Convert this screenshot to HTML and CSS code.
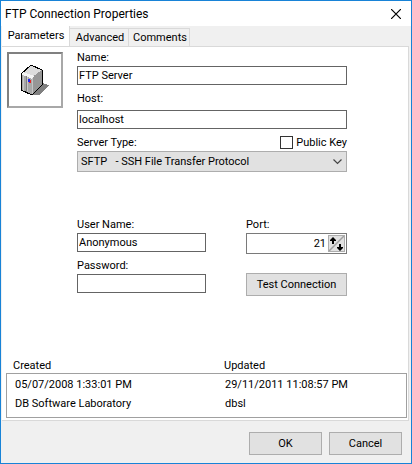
FILE: index.html
```html
<!DOCTYPE html>
<html lang="en">
<head>
<meta charset="utf-8">
<meta name="viewport" content="width=device-width, initial-scale=1">
<title>FTP Connection Properties</title>
<link rel="stylesheet" href="styles.css">
</head>
<body>
<form class="window">
  <header class="titlebar">
    <h1 class="title">FTP Connection Properties</h1>
    <button class="close" type="button" aria-label="Close">
      <svg width="10" height="10" viewBox="0 0 10 10"><path d="M0 0L10 10M10 0L0 10" stroke="#000" stroke-width="1.2"/></svg>
    </button>
  </header>
  <nav class="tabs" role="tablist">
    <button class="tab tab-active" type="button" role="tab" aria-selected="true">Parameters</button>
    <button class="tab" type="button" role="tab">Advanced</button>
    <button class="tab" type="button" role="tab">Comments</button>
  </nav>
  <main class="panel">
    <div class="params">
      <div class="picture">
        <svg width="30" height="32" viewBox="0 0 30 32" shape-rendering="crispEdges">
          <path d="M12 31L22 19L29 21L27 24L19 31Z" fill="#808080"/>
          <path d="M1 10L11 1L22 6L12 13Z" fill="#dcdcdc"/>
          <path d="M1 10L12 13V31L1 26Z" fill="#a8a8a8"/>
          <path d="M12 13L22 6V21L12 31Z" fill="#969696"/>
          <path d="M1 10L3 8L14 12L12 15Z" fill="#f4f4f4"/>
          <path d="M3.500 11V27M7.500 13V29" stroke="#c8c8c8"/>
          <path d="M6.500 12V28" stroke="#808080"/>
          <path d="M12.500 14V30" stroke="#c4c4c4"/>
          <path d="M1 10L11 1L22 6V21L12 31L1 26Z" fill="none" stroke="#000"/>
          <path d="M8 15H10V18H8Z" fill="#22e"/>
          <path d="M10 16H11V19H9V18H10Z" fill="#e22"/>
        </svg>
      </div>
      <div class="fields">
        <div class="field">
          <label for="name">Name:</label>
          <input class="text" id="name" type="text" value="FTP Server">
        </div>
        <div class="field field-loose">
          <label for="host">Host:</label>
          <input class="text" id="host" type="text" value="localhost">
        </div>
        <div class="field">
          <div class="split">
            <label for="type">Server Type:</label>
            <span class="check"><input class="box" id="key" type="checkbox"><label for="key">Public Key</label></span>
          </div>
          <div class="combo">
            <select id="type"><option>SFTP &nbsp; - SSH File Transfer Protocol</option></select>
            <svg class="chevron" width="9" height="6" viewBox="0 0 9 6"><path d="M.5 .5L4.500 4.500L8.500 .5" fill="none" stroke="#444" stroke-width="1.200"/></svg>
          </div>
        </div>
        <div class="account">
          <div class="login">
            <div class="field">
              <label for="user">User Name:</label>
              <input class="text" id="user" type="text" value="Anonymous">
            </div>
            <div class="field">
              <label for="pass">Password:</label>
              <input class="text" id="pass" type="password">
            </div>
          </div>
          <div class="connection">
            <div class="field">
              <label for="port">Port:</label>
              <div class="spin">
                <input id="port" type="text" value="21">
                <button class="spinner" type="button" aria-label="Change port">
                  <svg width="15" height="15" viewBox="0 0 15 15"><path d="M0 15L15 0" stroke="#a0a0a0" stroke-width="1.500"/><path d="M4 1L7 4V5H5V8H3V5H1V4Z" fill="#000"/><path d="M11 15L14 12V11H12V8H10V11H8V12Z" fill="#000"/></svg>
                </button>
              </div>
            </div>
            <button class="button" type="button">Test Connection</button>
          </div>
        </div>
      </div>
    </div>
    <table class="audit">
      <thead><tr><th>Created</th><th>Updated</th></tr></thead>
      <tbody>
        <tr><td>05/07/2008 1:33:01 PM</td><td>29/11/2011 11:08:57 PM</td></tr>
        <tr><td>DB Software Laboratory</td><td>dbsl</td></tr>
      </tbody>
    </table>
  </main>
  <footer class="footer">
    <button class="button" type="button">OK</button>
    <button class="button" type="button">Cancel</button>
  </footer>
</form>
</body>
</html>
```
FILE: styles.css
```css
* { box-sizing: border-box; }

body {
  margin: 0;
  background: #f0f0f0;
  color: #000;
  font: 11px/14px Roboto, "Liberation Sans", sans-serif;
}

button, input, select {
  font: inherit;
  color: inherit;
  border-radius: 0;
  margin: 0;
}

svg { display: block; }

.window {
  display: flex;
  flex-direction: column;
  min-height: 100vh;
  border: 1px solid #1883d7;
  background: #f0f0f0;
}

.titlebar {
  display: flex;
  align-items: center;
  justify-content: space-between;
  height: 25px;
  padding: 0 10px 0 4px;
  background: #fff;
}

.title {
  margin: 0;
  font-size: 12px;
  font-weight: normal;
}

.close {
  padding: 0;
  border: 0;
  background: none;
}

.tabs {
  display: flex;
  align-items: flex-end;
  height: 20px;
  padding-left: 1px;
}

.tab {
  min-width: 59px;
  height: 18px;
  padding: 0 2px 0 4px;
  border: 1px solid #d9d9d9;
  border-width: 1px 1px 0 0;
  background: #f0f0f0;
}

.tab-active {
  min-width: 68px;
  height: 20px;
  padding: 0 4px 0 5px;
  border-width: 0 1px 0 0;
  background: #fff;
}

.panel {
  display: flex;
  flex-direction: column;
  justify-content: space-between;
  flex: 1;
  margin: 0 2px 1px 1px;
  padding: 3px 1px 2px 4px;
  border: 1px solid #d9d9d9;
  border-left: 0;
  background: #fff;
}

.params {
  display: flex;
  align-items: flex-start;
  gap: 14px;
  padding: 0 60px 0 1px;
}

.picture {
  display: grid;
  place-items: center;
  width: 56px;
  height: 56px;
  margin-top: 2px;
  border: 2px solid #808080;
  border-color: #808080 #a8a8a8 #a8a8a8 #808080;
}

.fields {
  display: flex;
  flex: 1;
  flex-direction: column;
  gap: 6px;
  min-width: 0;
}

.field {
  display: flex;
  flex-direction: column;
  gap: 1px;
}

.field label { padding-top: 1px; }

.field-loose { gap: 4px; }

.text {
  width: 100%;
  height: 19px;
  padding: 0 1px;
  border: 1px solid #646464;
  background: #fff;
}

.split {
  display: flex;
  justify-content: space-between;
}

.check {
  display: flex;
  align-items: center;
  gap: 3px;
}

.box {
  appearance: none;
  width: 13px;
  height: 13px;
  border: 1px solid #333;
  background: #fff;
}

.combo { position: relative; }

.combo select {
  display: block;
  appearance: none;
  width: 100%;
  height: 21px;
  padding: 0 20px 0 3px;
  border: 1px solid #adadad;
  background: #e1e1e1;
}

.chevron {
  position: absolute;
  top: 8px;
  right: 5px;
  pointer-events: none;
}

.account {
  display: flex;
  justify-content: space-between;
  gap: 40px;
  padding-top: 39px;
}

.login {
  display: flex;
  flex: 1;
  flex-direction: column;
  gap: 6px;
}

.connection {
  display: flex;
  flex-direction: column;
  gap: 19px;
  width: 101px;
}

.spin {
  display: flex;
  align-items: center;
  height: 21px;
  padding: 0 1px;
  border: 1px solid #7a7a7a;
}

.spin input {
  flex: 1;
  min-width: 0;
  padding: 0 2px;
  border: 0;
  text-align: right;
}

.spinner {
  padding: 0;
  border: 1px solid #adadad;
  background: #e1e1e1;
}

.button {
  height: 23px;
  padding: 0;
  border: 1px solid #adadad;
  background: #e1e1e1;
}

.audit {
  width: 100%;
  border-spacing: 0;
  table-layout: fixed;
}

.audit th {
  height: 15px;
  padding: 0 7px;
  font-weight: normal;
  text-align: left;
}

.audit th:first-child { width: 211px; }

.audit td {
  padding: 0 8px;
}

.audit tbody td:first-child { border-left: 1px solid #a0a0a0; }
.audit tbody td:last-child { border-right: 1px solid #a0a0a0; }
.audit tbody tr:first-child td { height: 22px; border-top: 1px solid #a0a0a0; }
.audit tbody tr:last-child td { height: 23px; padding-bottom: 5px; border-bottom: 1px solid #a0a0a0; }

.footer {
  display: flex;
  justify-content: flex-end;
  gap: 7px;
  padding: 10px 9px 8px;
}

.footer .button { width: 73px; }
```
